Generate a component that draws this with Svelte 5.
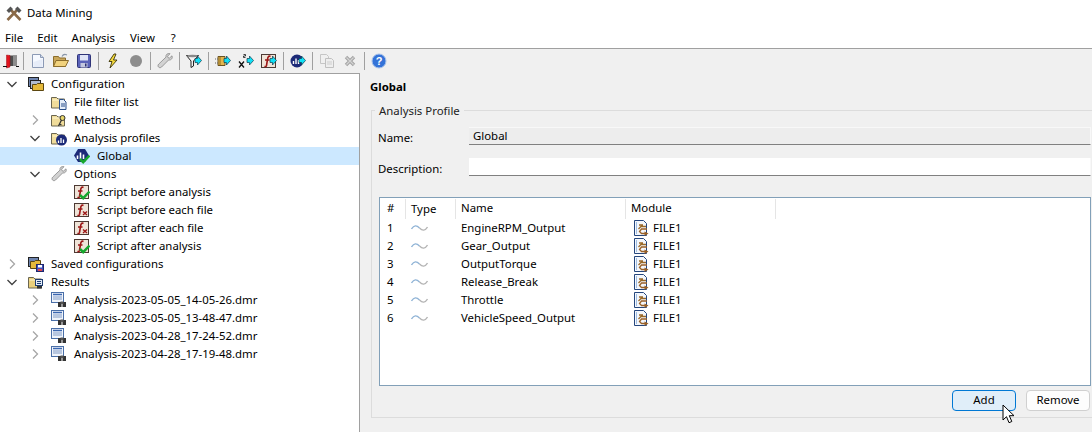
<script lang="ts">
	type TreeRow = {
		label: string;
		icon: string;
		depth: number;
		arrow?: 'open' | 'closed';
		selected?: boolean;
	};

	const menus = ['File', 'Edit', 'Analysis', 'View', '?'];

	const toolbar = [
		['exit'],
		['new', 'open', 'save'],
		['bolt', 'record'],
		['wrench'],
		['filter'],
		['methodRun', 'varRun', 'scriptRun'],
		['profileRun'],
		['copy', 'delete'],
		['help']
	];

	const tree: TreeRow[] = [
		{ label: 'Configuration', icon: 'config', depth: 0, arrow: 'open' },
		{ label: 'File filter list', icon: 'folderDoc', depth: 1 },
		{ label: 'Methods', icon: 'folderKey', depth: 1, arrow: 'closed' },
		{ label: 'Analysis profiles', icon: 'folderChart', depth: 1, arrow: 'open' },
		{ label: 'Global', icon: 'profileOk', depth: 2, selected: true },
		{ label: 'Options', icon: 'wrench', depth: 1, arrow: 'open' },
		{ label: 'Script before analysis', icon: 'scriptOk', depth: 2 },
		{ label: 'Script before each file', icon: 'scriptOff', depth: 2 },
		{ label: 'Script after each file', icon: 'scriptOff', depth: 2 },
		{ label: 'Script after analysis', icon: 'scriptOk', depth: 2 },
		{ label: 'Saved configurations', icon: 'saved', depth: 0, arrow: 'closed' },
		{ label: 'Results', icon: 'folderResult', depth: 0, arrow: 'open' },
		{ label: 'Analysis-2023-05-05_14-05-26.dmr', icon: 'result', depth: 1, arrow: 'closed' },
		{ label: 'Analysis-2023-05-05_13-48-47.dmr', icon: 'result', depth: 1, arrow: 'closed' },
		{ label: 'Analysis-2023-04-28_17-24-52.dmr', icon: 'result', depth: 1, arrow: 'closed' },
		{ label: 'Analysis-2023-04-28_17-19-48.dmr', icon: 'result', depth: 1, arrow: 'closed' }
	];

	const channels = [
		'EngineRPM_Output',
		'Gear_Output',
		'OutputTorque',
		'Release_Break',
		'Throttle',
		'VehicleSpeed_Output'
	];
</script>

{#snippet arrow()}
	<path d="M9 5.500h2.500V3l4 4.500-4 4.500V9.500H9z" fill="#0fe0f5" stroke="#123a4a" stroke-width=".7" />
{/snippet}

{#snippet check()}
	<path d="M6 11l3.200 3.200L15.500 7.500" fill="none" stroke="#17a82e" stroke-width="2.500" />
{/snippet}

{#snippet folder(fill = '#f0dc9a')}
	<path d="M.5 3.500h5l1.500 1.500h6.500v9h-13z" fill={fill} stroke="#6b6650" />
	<path d="M1.500 6h11" stroke="#fff6d0" />
{/snippet}

{#snippet scriptBox()}
	<rect x=".5" y="1.500" width="14" height="13" fill="#efe4d8" stroke="#4d3a34" />
	<path d="M9.500 3.500C7.500 2.500 6.800 4 6.500 6.500L5.500 12.500C5.200 13.600 4.400 13.600 3.500 13.200M4 7h4.500" fill="none" stroke="#9c1616" stroke-width="1.600" />
{/snippet}

{#snippet icon(name: string)}
	<svg class="icon" viewBox="0 0 16 16" width="16" height="16" aria-hidden="true">
		{#if name === 'exit'}
			<rect x="6" y="2.500" width="8" height="10.500" fill="#4d4d4d" />
			<rect x="10" y="2.500" width="4" height="10.500" fill="#8d8d8d" />
			<path d="M3.500 2l3.500 .5V14l-3.500 1z" fill="#e2141e" stroke="#9c0c14" stroke-width=".5" />
			<path d="M0 13.500h4M13 13.500h3" stroke="#111" />
		{:else if name === 'new'}
			<path d="M2.500 1.500h8l3 3v10h-11z" fill="#f6f9ff" stroke="#8c9ab5" />
			<path d="M10.500 1.500v3h3" fill="#cfd9ea" stroke="#8c9ab5" />
			<path d="M3.500 9v5h9V6z" fill="#dfe7f5" opacity=".7" />
		{:else if name === 'open'}
			<path d="M.5 3.500h5l1 1.500h6v8.500H.5z" fill="#c9a75a" stroke="#8b6d2c" />
			<path d="M3 7.500h12.500l-3 6H.5z" fill="#f1d27d" stroke="#8b6d2c" />
			<path d="M9 3.500C10 1.500 12 1 14 2" fill="none" stroke="#8996a8" stroke-width="1.200" />
		{:else if name === 'save'}
			<rect x="1.500" y="1.500" width="13" height="13" rx="1" fill="#5a62b8" stroke="#2f3478" />
			<rect x="4" y="2" width="8" height="5.500" fill="#dfe4f6" />
			<rect x="4.500" y="10" width="7" height="4.500" fill="#c3c7de" />
			<rect x="9" y="10.500" width="1.500" height="3" fill="#2a2f70" />
		{:else if name === 'bolt'}
			<path d="M9 1L4 8.500h3L5 15l7-8H8.500L11 1z" fill="#f7dc3c" stroke="#3a3208" stroke-width=".9" />
		{:else if name === 'record'}
			<circle cx="8" cy="8" r="6" fill="#8d8d8d" />
		{:else if name === 'wrench'}
			<path d="M15 2.800l-2.600 2.300-1.400-.4-.4-1.500L13 .7C10.600-.1 8.400 1.700 9 4.100L1.800 11C.8 12 .8 13.300 1.600 14.100s2 .8 3-.1l7.100-7.100c2.400.6 4.300-1.700 3.300-4.100z" fill="#d2d2d2" stroke="#7d7d7d" stroke-width=".7" />
		{:else if name === 'filter'}
			<path d="M.5 2.500h12L7.500 8v5l-2.500 1.500V8z" fill="#f2f2f2" stroke="#222" />
			<ellipse cx="6.500" cy="3" rx="5.500" ry="1.200" fill="#8a8a8a" />
			{@render arrow()}
		{:else if name === 'methodRun'}
			<path d="M3 3.500h7v9H3z" fill="#e3b64e" stroke="#6b5320" />
			<path d="M5 4v8" stroke="#8a6a20" />
			<path d="M0 6h3M0 10h3" stroke="#666" stroke-dasharray="1 1" />
			{@render arrow()}
		{:else if name === 'varRun'}
			<path d="M1 8.500l5 6M6 8.500l-5 6" stroke="#111" stroke-width="1.300" />
			<path d="M5.500 1.500h2v1.500h-2v1.500h2" fill="none" stroke="#111" stroke-width=".8" />
			{@render arrow()}
		{:else if name === 'scriptRun'}
			{@render scriptBox()}
			{@render arrow()}
		{:else if name === 'profileRun'}
			<circle cx="7" cy="8" r="6.500" fill="#1c2a78" />
			<path d="M3.500 8v3M6 5.500v5.500M8.500 7v4" stroke="#fff" stroke-width="1.400" />
			{@render arrow()}
		{:else if name === 'copy'}
			<path d="M1.500 1.500h6l2 2v7h-8z" fill="#f0f0f0" stroke="#c6c6c6" />
			<path d="M6.500 5.500h6l2 2v7h-8z" fill="#eeeeee" stroke="#c0c0c0" />
			<path d="M8 9h5M8 11h5" stroke="#cecece" />
		{:else if name === 'delete'}
			<path d="M4 4l8 8M12 4l-8 8" stroke="#a5a5a5" stroke-width="3.400" />
			<path d="M4.500 4.500l7 7M11.500 4.500l-7 7" stroke="#d4d4d4" stroke-width="1.200" />
		{:else if name === 'help'}
			<circle cx="8" cy="8" r="7" fill="#3473d8" stroke="#a9c3ea" />
			<text x="8" y="12" text-anchor="middle" class="qmark">?</text>
		{:else if name === 'config'}
			<rect x=".5" y="1.500" width="10" height="9" fill="#6f85b0" stroke="#222" />
			<rect x="2.500" y="4.500" width="10" height="8" fill="#b0bcd0" stroke="#222" />
			<path d="M4.500 8.500h4l1-1h6v7h-11z" fill="#e5b93a" stroke="#5c4710" />
		{:else if name === 'folderDoc'}
			{@render folder()}
			<path d="M8.500 5.500h4l2.500 2.500v7.500H8.500z" fill="#e7effa" stroke="#2a4f8a" />
			<path d="M10 10h4M10 12h4" stroke="#2a4f8a" />
		{:else if name === 'folderKey'}
			{@render folder()}
			<circle cx="11.500" cy="6" r="2.500" fill="#e6d56a" stroke="#333" />
			<path d="M10.500 8l-3 6M8.500 12l2 1" stroke="#333" stroke-width="1.300" />
		{:else if name === 'folderChart'}
			{@render folder()}
			<circle cx="10.500" cy="10" r="5.500" fill="#1c2a78" />
			<path d="M7.500 10.500v2.500M10 8v5M12.500 9.500v3.500" stroke="#fff" stroke-width="1.300" />
		{:else if name === 'profileOk'}
			<path d="M4 1h7l4 6.500-4 6.500H4L0 7.500z" fill="#1c2a78" />
			<path d="M3.500 7.500v3.500M6.500 4.500v6.500M9.500 6.500v4.500" stroke="#fff" stroke-width="1.600" />
			{@render check()}
		{:else if name === 'scriptOk'}
			{@render scriptBox()}
			{@render check()}
		{:else if name === 'scriptOff'}
			{@render scriptBox()}
			<path d="M9 9.500l4 3.500M13 9.500l-4 3.500" stroke="#9c1616" stroke-width="1.400" />
		{:else if name === 'saved'}
			<rect x=".5" y="1.500" width="10" height="9" fill="#6f85b0" stroke="#222" />
			<path d="M2.500 5.500h4l1-1h5v8h-10z" fill="#e5b93a" stroke="#5c4710" />
			<rect x="8.500" y="8.500" width="7" height="7" fill="#3f4fb8" stroke="#1f276b" />
			<rect x="10" y="9" width="4" height="2.500" fill="#fff" />
			<rect x="10" y="13" width="4" height="2" fill="#e04848" />
		{:else if name === 'folderResult'}
			{@render folder('#e9cf7c')}
			<rect x="7.500" y="5.500" width="7" height="6" fill="#e3ecf8" stroke="#1f3d70" />
			<path d="M9 7.500h4M9 9.500h4" stroke="#1f3d70" />
			<path d="M9 12h5v2.500H9z" fill="#333" />
		{:else if name === 'result'}
			<rect x=".5" y=".5" width="12" height="10" fill="#f0f4fb" stroke="#4a6fa8" />
			<path d="M2 2.500h9" stroke="#3b67b0" stroke-width="1.500" />
			<path d="M2 5h9M2 7h9" stroke="#7f99c4" />
			<rect x="7" y="10" width="3.500" height="5" fill="#333" />
			<rect x="11.500" y="10" width="3.500" height="5" fill="#333" />
			<rect x="9.500" y="9.500" width="3" height="2.500" fill="#555" />
		{:else if name === 'module'}
			<path d="M1.500 .5h9l3 3v12h-12z" fill="#f4f7fc" stroke="#25467d" />
			<path d="M3 3h1M3 5h1M3 7h1M3 9h1M3 11h1M3 13h1" stroke="#4d86c9" />
			<path d="M6 5h4M5.500 9L8 6.500h5" fill="none" stroke="#9a6a2a" stroke-width="1.300" />
			<path d="M14 9H8.500L6.500 11.500l2 2h3.500" fill="none" stroke="#9a6228" stroke-width="1.300" />
			<path d="M11.500 11.500l4 2-4 2.500z" fill="#9a6228" />
		{/if}
	</svg>
{/snippet}

<div class="window">
	<header class="titlebar">
		<svg class="app-icon" viewBox="0 0 16 16" width="16" height="16" aria-hidden="true">
			<path d="M3.500 2.500L14.500 14M12.500 2.500L1.500 14" stroke="#8a6a48" stroke-width="2.600" />
			<path d="M.5 4.500l4-4 2.500 2.500-4 4zM15.500 4.500l-4-4L9 3l4 4z" fill="#555" />
		</svg>
		<span>Data Mining</span>
	</header>

	<nav class="menubar">
		{#each menus as menu}
			<span>{menu}</span>
		{/each}
	</nav>

	<div class="toolbar">
		{#each toolbar as group, i}
			{#if i > 0}
				<span class="sep"></span>
			{/if}
			{#each group as name}
				<span class="tool" class:first={name === 'exit'}>
					{@render icon(name)}
				</span>
			{/each}
		{/each}
	</div>

	<main class="body">
		<aside class="tree">
			{#each tree as row}
				<div class="row" class:selected={row.selected} style="padding-left: {row.depth * 23}px">
					<span class="chevron">
						{#if row.arrow === 'open'}
							<svg viewBox="0 0 10 10" width="10" height="10" aria-hidden="true">
								<path d="M.5 3L5 7.500 9.500 3" fill="none" stroke="#404040" stroke-width="1.300" />
							</svg>
						{:else if row.arrow === 'closed'}
							<svg viewBox="0 0 10 10" width="10" height="10" aria-hidden="true">
								<path d="M3 .5L7.500 5 3 9.500" fill="none" stroke="#a6a6a6" stroke-width="1.300" />
							</svg>
						{/if}
					</span>
					{@render icon(row.icon)}
					<span class="label">{row.label}</span>
				</div>
			{/each}
		</aside>

		<section class="detail">
			<h1>Global</h1>
			<fieldset class="group">
				<legend>Analysis Profile</legend>
				<div class="field">
					<span class="field-label">Name:</span>
					<div class="input disabled">Global</div>
				</div>
				<div class="field">
					<span class="field-label">Description:</span>
					<div class="input"></div>
				</div>

				<div class="list">
					<div class="list-head">
						<span class="col-num">#</span>
						<span class="col-type">Type</span>
						<span class="col-name">Name</span>
						<span class="col-module">Module</span>
					</div>
					{#each channels as channel, i}
						<div class="list-row">
							<span class="col-num">{i + 1}</span>
							<span class="col-type">
								<svg viewBox="0 0 17 8" width="17" height="8" aria-hidden="true">
									<path d="M.5 5C3 1 5.500 1 8.500 4" fill="none" stroke="#8fb3d6" stroke-width="1.400" />
									<path d="M8.500 4C11.500 7 14 7 16.500 3" fill="none" stroke="#b4b4b4" stroke-width="1.400" />
								</svg>
							</span>
							<span class="col-name">{channel}</span>
							<span class="col-module">
								{@render icon('module')}
								<span>FILE1</span>
							</span>
						</div>
					{/each}
				</div>

				<div class="actions">
					<button type="button" class="hover">Add</button>
					<button type="button">Remove</button>
					<svg class="cursor" viewBox="0 0 14 21" width="14" height="21" aria-hidden="true">
						<path d="M1 1v15l3.500-3.300 2.500 6 2.800-1.200-2.500-5.800H12z" fill="#fff" stroke="#000" />
					</svg>
				</div>
			</fieldset>
		</section>
	</main>
</div>

<style>
	:global(body) {
		background: #f0f0f0;
	}

	.window {
		width: 1092px;
		height: 432px;
		overflow: hidden;
		display: flex;
		flex-direction: column;
		font-family: 'Noto Sans', sans-serif;
		font-size: 11.4px;
		color: #000;
		background: #f0f0f0;
	}

	.titlebar {
		height: 27px;
		flex-shrink: 0;
		display: flex;
		align-items: center;
		gap: 5px;
		padding-left: 6px;
		background: #fff;
	}

	.titlebar span {
		padding-bottom: 2px;
	}

	.menubar {
		height: 22px;
		flex-shrink: 0;
		display: flex;
		align-items: center;
		padding-left: 5px;
		background: #fff;
		border-bottom: 1px solid #a0a0a0;
		box-sizing: border-box;
	}

	.menubar span {
		margin-right: 14px;
	}

	.menubar span:nth-child(3) {
		margin-right: 15px;
	}

	.menubar span:nth-child(4) {
		margin-right: 16px;
	}

	.toolbar {
		height: 24px;
		flex-shrink: 0;
		display: flex;
		align-items: center;
		background: #f0f0f0;
	}

	.tool {
		width: 23px;
		height: 24px;
		display: flex;
		align-items: center;
		justify-content: center;
	}

	.tool.first {
		width: 20.5px;
		justify-content: flex-end;
		padding-right: 2px;
		box-sizing: border-box;
	}

	.sep {
		width: 6px;
		height: 18px;
		display: flex;
		justify-content: center;
	}

	.sep::before {
		content: '';
		width: 1px;
		background: #a0a0a0;
	}

	.icon {
		flex-shrink: 0;
	}

	.qmark {
		font: bold 11px 'Liberation Sans', sans-serif;
		fill: #fff;
	}

	.body {
		flex: 1;
		min-height: 0;
		display: flex;
	}

	.tree {
		width: 360px;
		flex-shrink: 0;
		box-sizing: border-box;
		padding-top: 1px;
		background: #fff;
		border-top: 1px solid #a0a0a0;
		border-right: 1px solid #a0a0a0;
	}

	.row {
		height: 18px;
		display: flex;
		align-items: center;
	}

	.row.selected {
		background: #cce8ff;
	}

	.chevron {
		width: 28px;
		height: 18px;
		flex-shrink: 0;
		display: flex;
		align-items: center;
		padding-left: 7px;
		box-sizing: border-box;
	}

	.label {
		margin-left: 7px;
		padding-bottom: 2px;
		white-space: nowrap;
	}

	.detail {
		flex: 1;
		min-width: 0;
		overflow: hidden;
		padding: 6px 0 0 11px;
	}

	h1 {
		margin: 0 0 7px -1px;
		font-size: 11.4px;
		line-height: 16px;
		font-weight: 700;
	}

	.group {
		width: 760px;
		height: 316px;
		margin: 0;
		padding: 9px 0 0 7px;
		box-sizing: border-box;
		border: 1px solid #dcdcdc;
		min-width: 0;
	}

	legend {
		margin-left: -4px;
		padding: 2px 4px 0;
		line-height: 14px;
		color: #222;
	}

	.field {
		width: 712px;
		height: 18px;
		display: flex;
		align-items: center;
		margin-bottom: 13px;
	}

	.field-label {
		width: 90px;
		flex-shrink: 0;
		margin-top: 3px;
		margin-left: -1px;
		padding-left: 0;
		margin-right: 1px;
	}

	.input {
		flex: 1;
		height: 18px;
		box-sizing: border-box;
		padding: 0 4px;
		line-height: 16px;
		background: #fff;
		border-right: 1px solid #f8f8f8;
		border-bottom: 1px solid #808080;
	}

	.input.disabled {
		background: #ededed;
		border-top: 1px solid #f8f8f8;
		border-right: 1px solid #f8f8f8;
	}

	.list {
		width: 712px;
		height: 189px;
		box-sizing: border-box;
		margin-top: 21px;
		background: #fff;
		border: 1px solid #82a0b8;
	}

	.list-head,
	.list-row {
		display: flex;
		align-items: center;
		height: 18px;
	}

	.list-head {
		height: 21px;
	}

	.list-head span {
		height: 20px;
		line-height: 17px;
		border-right: 1px solid #e5e5e5;
		box-sizing: border-box;
	}

	.col-num {
		width: 26px;
		padding-left: 7px;
		padding-bottom: 2px;
		box-sizing: border-box;
		flex-shrink: 0;
	}

	.col-type {
		width: 50px;
		padding-left: 5px;
		box-sizing: border-box;
		flex-shrink: 0;
		display: flex;
		align-items: center;
	}

	.col-name {
		width: 170px;
		padding-left: 5px;
		padding-bottom: 2px;
		box-sizing: border-box;
		flex-shrink: 0;
	}

	.col-module {
		width: 150px;
		padding-left: 5px;
		box-sizing: border-box;
		flex-shrink: 0;
	}

	.list-row .col-module {
		padding-left: 7px;
		display: flex;
		align-items: center;
		gap: 4px;
	}

	.list-row .col-module span {
		padding-bottom: 2px;
	}

	.actions {
		position: relative;
		width: 712px;
		box-sizing: border-box;
		display: flex;
		justify-content: flex-end;
		gap: 10px;
		margin-top: 4px;
		padding-right: 1px;
	}

	button {
		width: 64px;
		height: 21px;
		padding: 0 0 2px;
		font: inherit;
		color: #000;
		background: #fdfdfd;
		border: 1px solid #d0d0d0;
		border-radius: 4px;
	}

	button.hover {
		background: #e0eef9;
		border: 1px solid #0078d4;
	}

	.cursor {
		position: absolute;
		right: 75px;
		top: 14px;
	}
</style>
